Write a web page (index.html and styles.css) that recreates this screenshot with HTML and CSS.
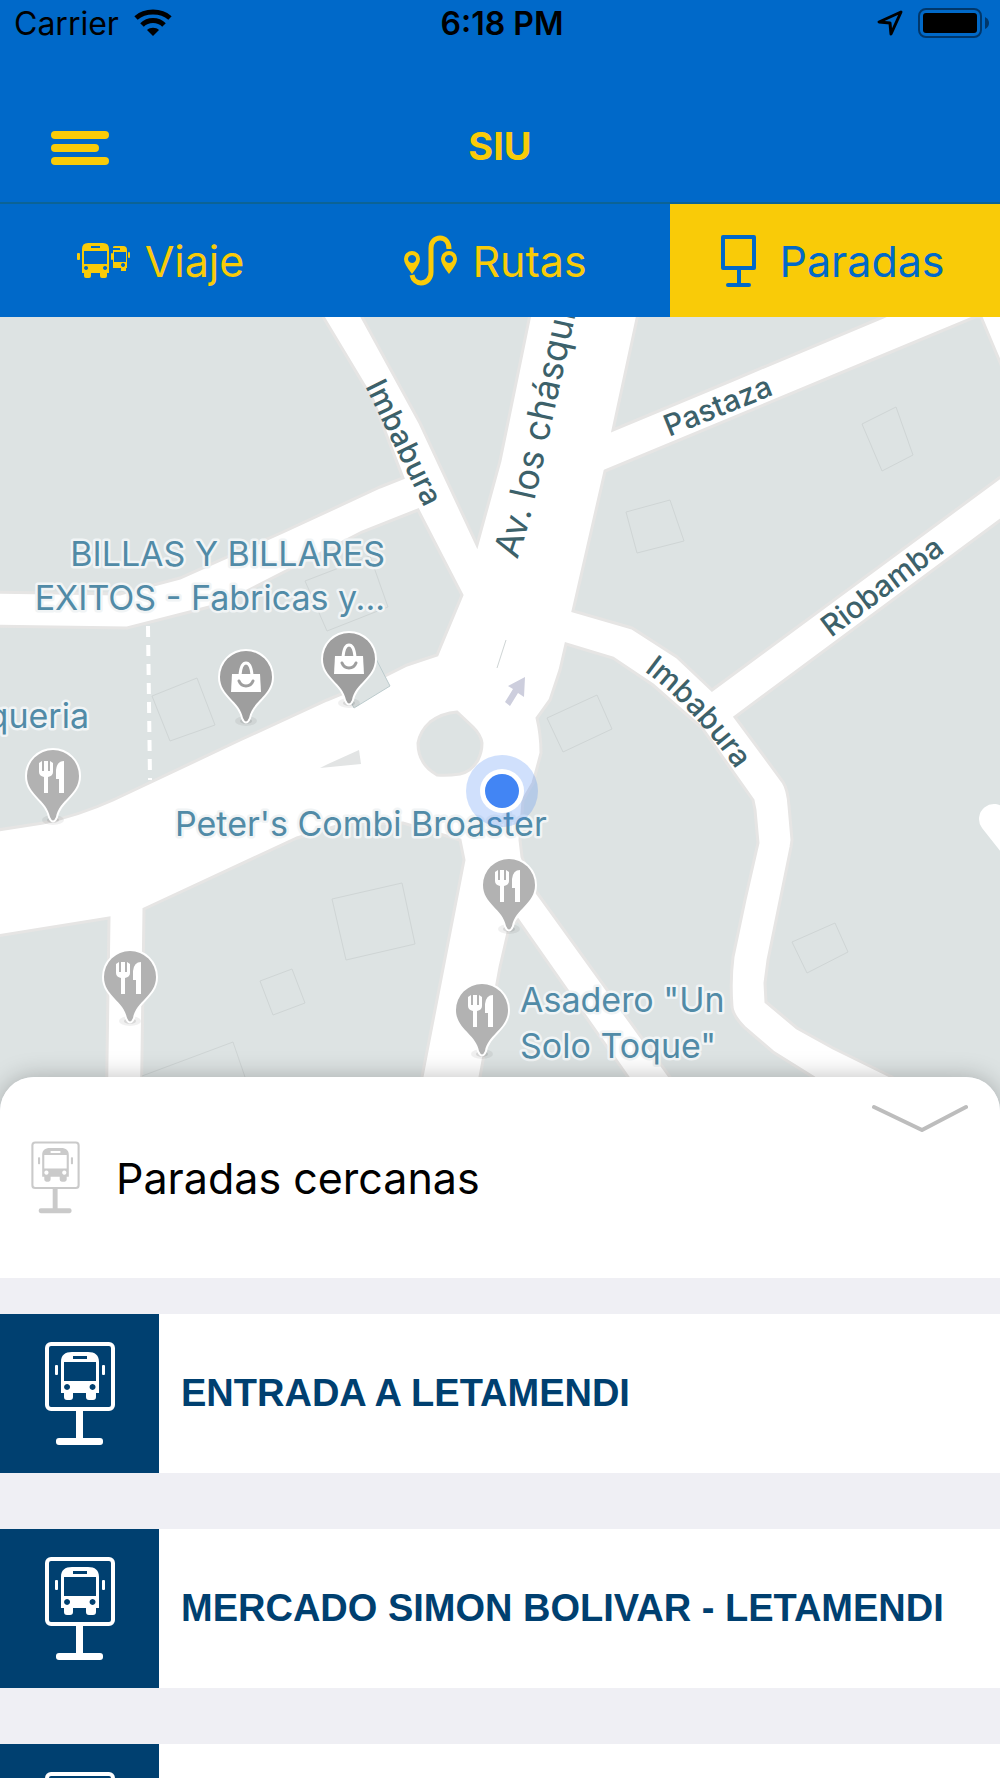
FILE: index.html
```html
<!DOCTYPE html>
<html lang="es">
<head>
    <meta charset="UTF-8">
    <meta name="viewport" content="width=device-width, initial-scale=1.0">
    <title>SIU - Paradas</title>
    <link rel="stylesheet" href="styles.css">
</head>
<body>
    <!-- Shared icons -->
    <svg class="sprite" aria-hidden="true">
        <symbol id="stop-sign" viewBox="0 0 70 104">
            <rect class="sign-frame" x="2" y="2" width="66" height="65" rx="4"/>
            <g stroke="none">
                <path fill-rule="evenodd" d="M16 20 C16 13 20 10 27 10 H43 C50 10 54 13 54 20 V51 H51 V55 Q51 58 48 58 H44 Q41 58 41 55 V51 H28 V55 Q28 58 25 58 H22 Q19 58 19 55 V51 H16 Z M19 20 V39 H51 V20 Z M28 14 V17 H42 V14 Z M22 42 a3 3 0 1 0 .1 0 Z M47.500 42 a3 3 0 1 0 .1 0 Z"/>
                <rect x="10" y="23" width="3" height="10" rx="1"/>
                <rect x="57" y="23" width="3" height="10" rx="1"/>
                <rect x="31" y="68" width="7" height="30"/>
                <rect x="11" y="96" width="47" height="7" rx="3"/>
            </g>
        </symbol>
        <symbol id="pin-shape" viewBox="-34 -34 68 88" overflow="visible">
            <ellipse cx="0" cy="44" rx="11" ry="5" fill="#000" opacity=".06"/>
            <ellipse cx="0" cy="44" rx="6" ry="3" fill="#000" opacity=".1"/>
            <path d="M-26 0 A26 26 0 0 1 26 0 C26 19 6 24 3 41 Q0 48 -3 41 C-6 24 -26 19 -26 0 Z" stroke="#fff" stroke-width="4" paint-order="stroke"/>
        </symbol>
        <symbol id="fork" viewBox="-34 -34 68 88">
            <use href="#pin-shape" x="-34" y="-34" width="68" height="88"/>
            <path fill="#fff" d="M-14 -13 L-11 -15 V-5 H-9 V-15 H-5 V-5 H-3 V-15 L0 -13 V-4 Q0 0 -5 1 V17 H-9 V1 Q-14 0 -14 -4 Z M11 -15 V17 H6 V3 H3 V-6 Q4 -15 11 -15 Z"/>
        </symbol>
        <symbol id="bag" viewBox="-34 -34 68 88">
            <use href="#pin-shape" x="-34" y="-34" width="68" height="88"/>
            <path fill="#fff" d="M-14 -3 H14 L15 15 H-15 Z"/>
            <path fill="none" stroke="#fff" stroke-width="3" d="M-6 -2 Q-5 -14 0 -14 Q5 -14 6 -2"/>
            <path fill="none" stroke="#9e9e9e" stroke-width="3" stroke-linecap="round" d="M-7 4 Q-5 9 0 9 Q5 9 7 4"/>
        </symbol>
    </svg>

    <div class="screen">
        <header class="header">
            <div class="status-bar">
                <div class="status-left">
                    <span>Carrier</span>
                    <svg width="38" height="28" viewBox="0 0 38 28" aria-hidden="true">
                        <g fill="none" stroke="#000" stroke-width="5">
                            <path d="M2 9 C11 1 27 1 36 9"/>
                            <path d="M8 16 C14 10 24 10 30 16"/>
                        </g>
                        <path d="M13 21 C16 18 22 18 25 21 L19 27 Z"/>
                    </svg>
                </div>
                <div class="status-time">6:18 PM</div>
                <div class="status-right">
                    <svg width="26" height="26" viewBox="0 0 26 26" aria-hidden="true">
                        <path d="M24 2 L2 12 L13 13 L14 24 Z" fill="none" stroke="#000" stroke-width="3" stroke-linejoin="round"/>
                    </svg>
                    <svg width="72" height="30" viewBox="0 0 72 30" aria-hidden="true">
                        <rect x="1" y="1" width="62" height="28" rx="7" fill="none" stroke="#00376b" stroke-width="2"/>
                        <rect x="5" y="5" width="54" height="20" rx="3"/>
                        <path d="M67 9 Q71 11 71 15 Q71 19 67 21 Z" fill="#00376b"/>
                    </svg>
                </div>
            </div>
            <div class="nav-bar">
                <button class="menu-button" type="button" aria-label="Menú">
                    <span></span>
                    <span class="short"></span>
                    <span></span>
                </button>
                <h1>SIU</h1>
            </div>
        </header>

        <nav class="tabs">
            <a class="tab" href="#viaje">
                <svg width="54" height="52" viewBox="0 0 54 52" aria-hidden="true">
                    <path fill-rule="evenodd" d="M5 14 Q5 8 11 8 H26 Q32 8 32 14 V38 H30 V41 Q30 43 28 43 H25 Q23 43 23 41 V38 H14 V41 Q14 43 12 43 H9 Q7 43 7 41 V38 H5 Z M7 16 V29 H30 V16 Z M14 11 V13 H23 V11 Z M9 31 a2 2 0 1 0 .1 0 Z M28 31 a2 2 0 1 0 .1 0 Z"/>
                    <path fill-rule="evenodd" d="M36 12 Q36 11 38 11 H46 Q50 11 50 15 V33 H49 V36 H44 V33 H36 V27 H49 V17 H36 Z M36 13 V15 H43 V13 Z M46 28 a2 2 0 1 0 .1 0 Z"/>
                    <rect x="0" y="18" width="3" height="7" rx="1"/>
                    <rect x="34" y="18" width="2" height="7" rx="1"/>
                    <rect x="36" y="15" width="1" height="13"/>
                    <rect x="51" y="17" width="2" height="6" rx="1"/>
                </svg>
                <span>Viaje</span>
            </a>
            <a class="tab" href="#rutas">
                <svg width="54" height="52" viewBox="0 0 54 52" aria-hidden="true">
                    <path fill-rule="evenodd" d="M8 16 A8 8 0 0 1 16 24 Q16 29 8 39 Q0 29 0 24 A8 8 0 0 1 8 16 Z M8 20 a4 4 0 1 0 .1 0 Z M45 16 A8 8 0 0 1 53 24 Q53 29 45 39 Q37 29 37 24 A8 8 0 0 1 45 16 Z M45 20 a4 4 0 1 0 .1 0 Z"/>
                    <path fill="none" stroke="currentColor" stroke-width="5" d="M8 40 C9 45 13 48 17 48 C23 48 27 43 27 37 V13 C27 7 31 3 36 3 C41 3 45 7 45 14"/>
                </svg>
                <span>Rutas</span>
            </a>
            <a class="tab active" href="#paradas" aria-current="page">
                <svg width="54" height="52" viewBox="0 0 54 52" aria-hidden="true">
                    <g fill="none" stroke="currentColor" stroke-width="4" stroke-linejoin="round" stroke-linecap="round">
                        <rect x="12" y="2" width="31" height="31"/>
                        <path d="M28 33 V50 M17 50 H38"/>
                    </g>
                </svg>
                <span>Paradas</span>
            </a>
        </nav>

        <main class="content">
            <svg class="map" viewBox="0 317 1000 800" preserveAspectRatio="xMidYMin slice" role="img" aria-label="Mapa">
                <rect x="0" y="317" width="1000" height="800" fill="#fff"/>
                <g class="land">
                    <path d="M-9 300 H313 L373 400 L403 478 L380 487 L283 532 L180 578 L120 594 L-9 592 Z"/>
                    <path d="M353 300 L362 317 L420 423 L477 545 L500 461 L533 300 Z"/>
                    <path d="M-9 626 L127 628 L217 605 L245 592 L362 532 L418 510 L462 595 L437 655 L407 665 L383 677 L327 700 L240 740 L113 800 Q80 815 43 823 L-9 831 Z"/>
                    <path d="M-9 937 L109 918 L106 1130 H-9 Z"/>
                    <path d="M144 909 L297 838 L340 825 L403 823 L460 840 L464 860 L422 1077 L412 1130 H141 Z"/>
                    <path d="M509 928 L518 920 L628 1077 L670 1140 H468 L480 1077 L500 967 Z"/>
                    <path d="M535 890 L522 857 L520 840 L523 800 L533 783 L541 753 Q541 735 537 718 L550 700 L560 670 L566 644 L613 658 L653 685 L702 728 L753 800 L755 810 L758 843 L745 900 L733 957 Q730 980 732 1007 Q733 1016 745 1028 L773 1052 L813 1077 L900 1140 H710 L670 1077 Z"/>
                    <path d="M605 471 L867 362 L975 317 L981 317 L1010 386 V470 L712 690 L677 657 L632 628 L573 611 Z"/>
                    <path d="M641 300 L613 430 L733 380 L883 317 L923 300 Z"/>
                    <path d="M1010 513 L735 717 L783 782 Q788 790 789 806 L792 840 L791 847 L768 960 L765 983 L766 1002 L797 1028 L833 1048 L892 1077 L960 1130 H1010 Z"/>
                    <path d="M430 722 Q442 713 457 712 L473 727 Q481 735 482 743 Q482 752 478 760 Q471 772 460 774 Q447 776 437 775 Q427 769 423 762 Q418 754 418 743 Q420 731 430 722 Z"/>
                    <path class="sliver" d="M359 750 L361 764 L320 768 L328 764 Z"/>
                </g>
                <path d="M994 819 L1020 852" stroke="#fff" stroke-width="30" stroke-linecap="round"/>
                <path d="M148 626 L150 780" stroke="#fff" stroke-width="4" stroke-dasharray="11 8"/>
                <g class="buildings">
                    <path d="M862 424 L896 407 L913 455 L882 471 Z"/>
                    <path d="M626 512 L670 500 L684 541 L637 553 Z"/>
                    <path d="M547 718 L597 695 L612 729 L563 752 Z"/>
                    <path d="M792 942 L835 923 L848 952 L807 973 Z"/>
                    <path d="M332 899 L402 883 L415 944 L346 960 Z"/>
                    <path d="M260 981 L292 969 L305 1003 L273 1015 Z"/>
                    <path d="M142 1076 L233 1042 L245 1077"/>
                    <path d="M305 581 L370 556 L388 607 L327 631 Z"/>
                    <path d="M152 696 L197 678 L215 725 L170 741 Z"/>
                    <path class="filled" d="M340 680 L374 655 L390 686 L354 708 Z"/>
                    <path d="M506 640 L497 668"/>
                </g>
                <path d="M525 677 L508 686 L513 689 L505 702 L510 706 L518 693 L524 697 Z" fill="#cdcedd"/>

                <g class="street">
                    <path id="chasqui" d="M517 560 Q529 526 535 498 L552 422 L583 280" fill="none"/>
                    <path id="imbabura" d="M644 671 Q693 707 740 775" fill="none"/>
                    <text class="avenue"><textPath href="#chasqui">Av. los chásqui</textPath></text>
                    <text><textPath href="#imbabura">Imbabura</textPath></text>
                    <text transform="translate(365 386) rotate(64)">Imbabura</text>
                    <text transform="translate(669 437) rotate(-22)">Pastaza</text>
                    <text transform="translate(831 638) rotate(-37)">Riobamba</text>
                </g>

                <g fill="#9e9e9e">
                    <use href="#bag" x="212" y="643" width="68" height="88"/>
                    <use href="#bag" x="315" y="625" width="68" height="88"/>
                </g>
                <g fill="#b2b2b2">
                    <use href="#fork" x="19" y="742" width="68" height="88"/>
                    <use href="#fork" x="96" y="943" width="68" height="88"/>
                    <use href="#fork" x="475" y="851" width="68" height="88"/>
                    <use href="#fork" x="448" y="976" width="68" height="88"/>
                </g>
                <g class="place">
                    <text class="end" x="385" y="566">BILLAS Y BILLARES</text>
                    <text class="end" x="385" y="610">EXITOS - Fabricas y...</text>
                    <text class="end" x="89" y="728">queria</text>
                    <text x="175" y="836">Peter's Combi Broaster</text>
                    <text x="520" y="1012">Asadero "Un</text>
                    <text x="520" y="1058">Solo Toque"</text>
                </g>
                <circle cx="502" cy="791" r="36" fill="#4285f4" opacity=".25"/>
                <circle cx="502" cy="791" r="22" fill="#fff"/>
                <circle cx="502" cy="791" r="17" fill="#4285f4"/>
            </svg>

            <section class="sheet">
                <div class="sheet-header">
                    <svg class="sheet-icon" aria-hidden="true"><use href="#stop-sign"/></svg>
                    <h2>Paradas cercanas</h2>
                    <button class="collapse" type="button" aria-label="Ocultar paradas">
                        <svg width="98" height="28" viewBox="0 0 98 28" aria-hidden="true">
                            <path d="M3 3 L51 26 L95 3" fill="none" stroke="#bdbdbd" stroke-width="4" stroke-linecap="round"/>
                        </svg>
                    </button>
                </div>
                <ul class="stops">
                    <li class="stop">
                        <span class="stop-tile"><svg aria-hidden="true"><use href="#stop-sign"/></svg></span>
                        <a href="#entrada-letamendi">ENTRADA A LETAMENDI</a>
                    </li>
                    <li class="stop">
                        <span class="stop-tile"><svg aria-hidden="true"><use href="#stop-sign"/></svg></span>
                        <a href="#mercado-simon-bolivar">MERCADO SIMON BOLIVAR - LETAMENDI</a>
                    </li>
                    <li class="stop">
                        <span class="stop-tile"><svg aria-hidden="true"><use href="#stop-sign"/></svg></span>
                    </li>
                </ul>
            </section>
        </main>
    </div>
</body>
</html>
```

FILE: styles.css
```css
* {
    box-sizing: border-box;
}
body {
    margin: 0;
    font-family: Inter, "Liberation Sans", sans-serif;
    background-color: #efeff4;
}
h1, h2 {
    margin: 0;
}
button {
    border: none;
    padding: 0;
    background: none;
    cursor: pointer;
}
a {
    text-decoration: none;
}
svg {
    display: block;
    flex-shrink: 0;
}
.sprite {
    position: absolute;
    width: 0;
    height: 0;
}
.screen {
    display: flex;
    flex-direction: column;
    height: 100vh;
    overflow: hidden;
}

/* Header */
.header {
    background-color: #0069c9;
    border-bottom: 2px solid #0b6396;
}
.status-bar {
    display: grid;
    grid-template-columns: 1fr auto 1fr;
    align-items: center;
    height: 46px;
    padding: 0 10px 0 14px;
    font-size: 32px;
}
.status-left,
.status-right {
    display: flex;
    align-items: center;
    gap: 15px;
}
.status-right {
    justify-content: flex-end;
}
.status-time {
    font-weight: 600;
}
.nav-bar {
    display: grid;
    grid-template-columns: 1fr auto 1fr;
    align-items: center;
    height: 156px;
    padding: 44px 51px 0;
}
.nav-bar h1 {
    font-size: 38px;
    font-weight: 700;
    color: #f9cb08;
}
.menu-button {
    display: flex;
    flex-direction: column;
    gap: 5px;
    width: 58px;
    padding-top: 4px;
}
.menu-button span {
    width: 58px;
    height: 8px;
    border-radius: 4px;
    background-color: #f9cb08;
}
.menu-button .short {
    width: 48px;
}

/* Tabs */
.tabs {
    display: grid;
    grid-template-columns: 67fr 67fr 66fr;
    background-color: #0069c9;
}
.tab {
    display: flex;
    align-items: center;
    justify-content: center;
    gap: 14px;
    height: 113px;
    padding-right: 14px;
    font-size: 43px;
    color: #f9cb08;
}
.tab svg {
    fill: currentColor;
}
.tab.active {
    background-color: #f9cb08;
    color: #0069c9;
}

/* Map */
.content {
    flex: 1;
    display: flex;
    flex-direction: column;
    min-height: 0;
}
.map {
    width: 100%;
    height: 800px;
}
.land path {
    fill: #dde3e3;
    stroke: #e6e5e4;
    stroke-width: 3;
}
.land .sliver {
    fill: #e2e4e4;
    stroke: none;
}
.buildings path {
    fill: none;
    stroke: #cfd5d5;
    stroke-width: 1;
}
.buildings .filled {
    fill: #dde3e3;
    stroke: #bccbcd;
}
.street text {
    font-size: 30px;
    font-weight: 500;
    fill: #3c616a;
}
.street .avenue {
    font-size: 36px;
    font-weight: 400;
}
.place text {
    font-size: 34px;
    fill: #518ba7;
    stroke: #f1f4f5;
    stroke-width: 5;
    stroke-linejoin: round;
    paint-order: stroke;
}
.place .end {
    text-anchor: end;
}

/* Bottom sheet */
.sheet {
    position: relative;
    flex: 1;
    min-height: 0;
    margin-top: -40px;
    border-radius: 34px 34px 0 0;
    background-color: #efeff4;
    box-shadow: 0 0 24px rgba(0, 0, 0, 0.25);
}
.sheet-header {
    display: flex;
    align-items: center;
    gap: 36px;
    height: 201px;
    padding: 0 31px;
    border-radius: 34px 34px 0 0;
    background-color: #fff;
}
.sheet-icon {
    width: 49px;
    height: 73px;
    fill: #cacaca;
    stroke: #cacaca;
    stroke-width: 3;
}
.sheet-header h2 {
    font-size: 43px;
    font-weight: 400;
    color: #000;
}
.sign-frame {
    fill: none;
}
.collapse {
    align-self: flex-start;
    margin-left: auto;
    padding-top: 27px;
}

/* Stops */
.stops {
    display: flex;
    flex-direction: column;
    gap: 56px;
    margin: 0;
    padding: 36px 0;
    list-style: none;
}
.stop {
    display: flex;
    align-items: center;
    gap: 22px;
    background-color: #fff;
}
.stop-tile {
    display: flex;
    align-items: center;
    justify-content: center;
    width: 159px;
    height: 159px;
    background-color: #004070;
}
.stop-tile svg {
    width: 70px;
    height: 104px;
    fill: #fff;
    stroke: #fff;
    stroke-width: 4;
}
.stop a {
    font-family: "Liberation Sans", Arial, sans-serif;
    font-size: 38px;
    font-weight: 700;
    color: #004070;
}
```
